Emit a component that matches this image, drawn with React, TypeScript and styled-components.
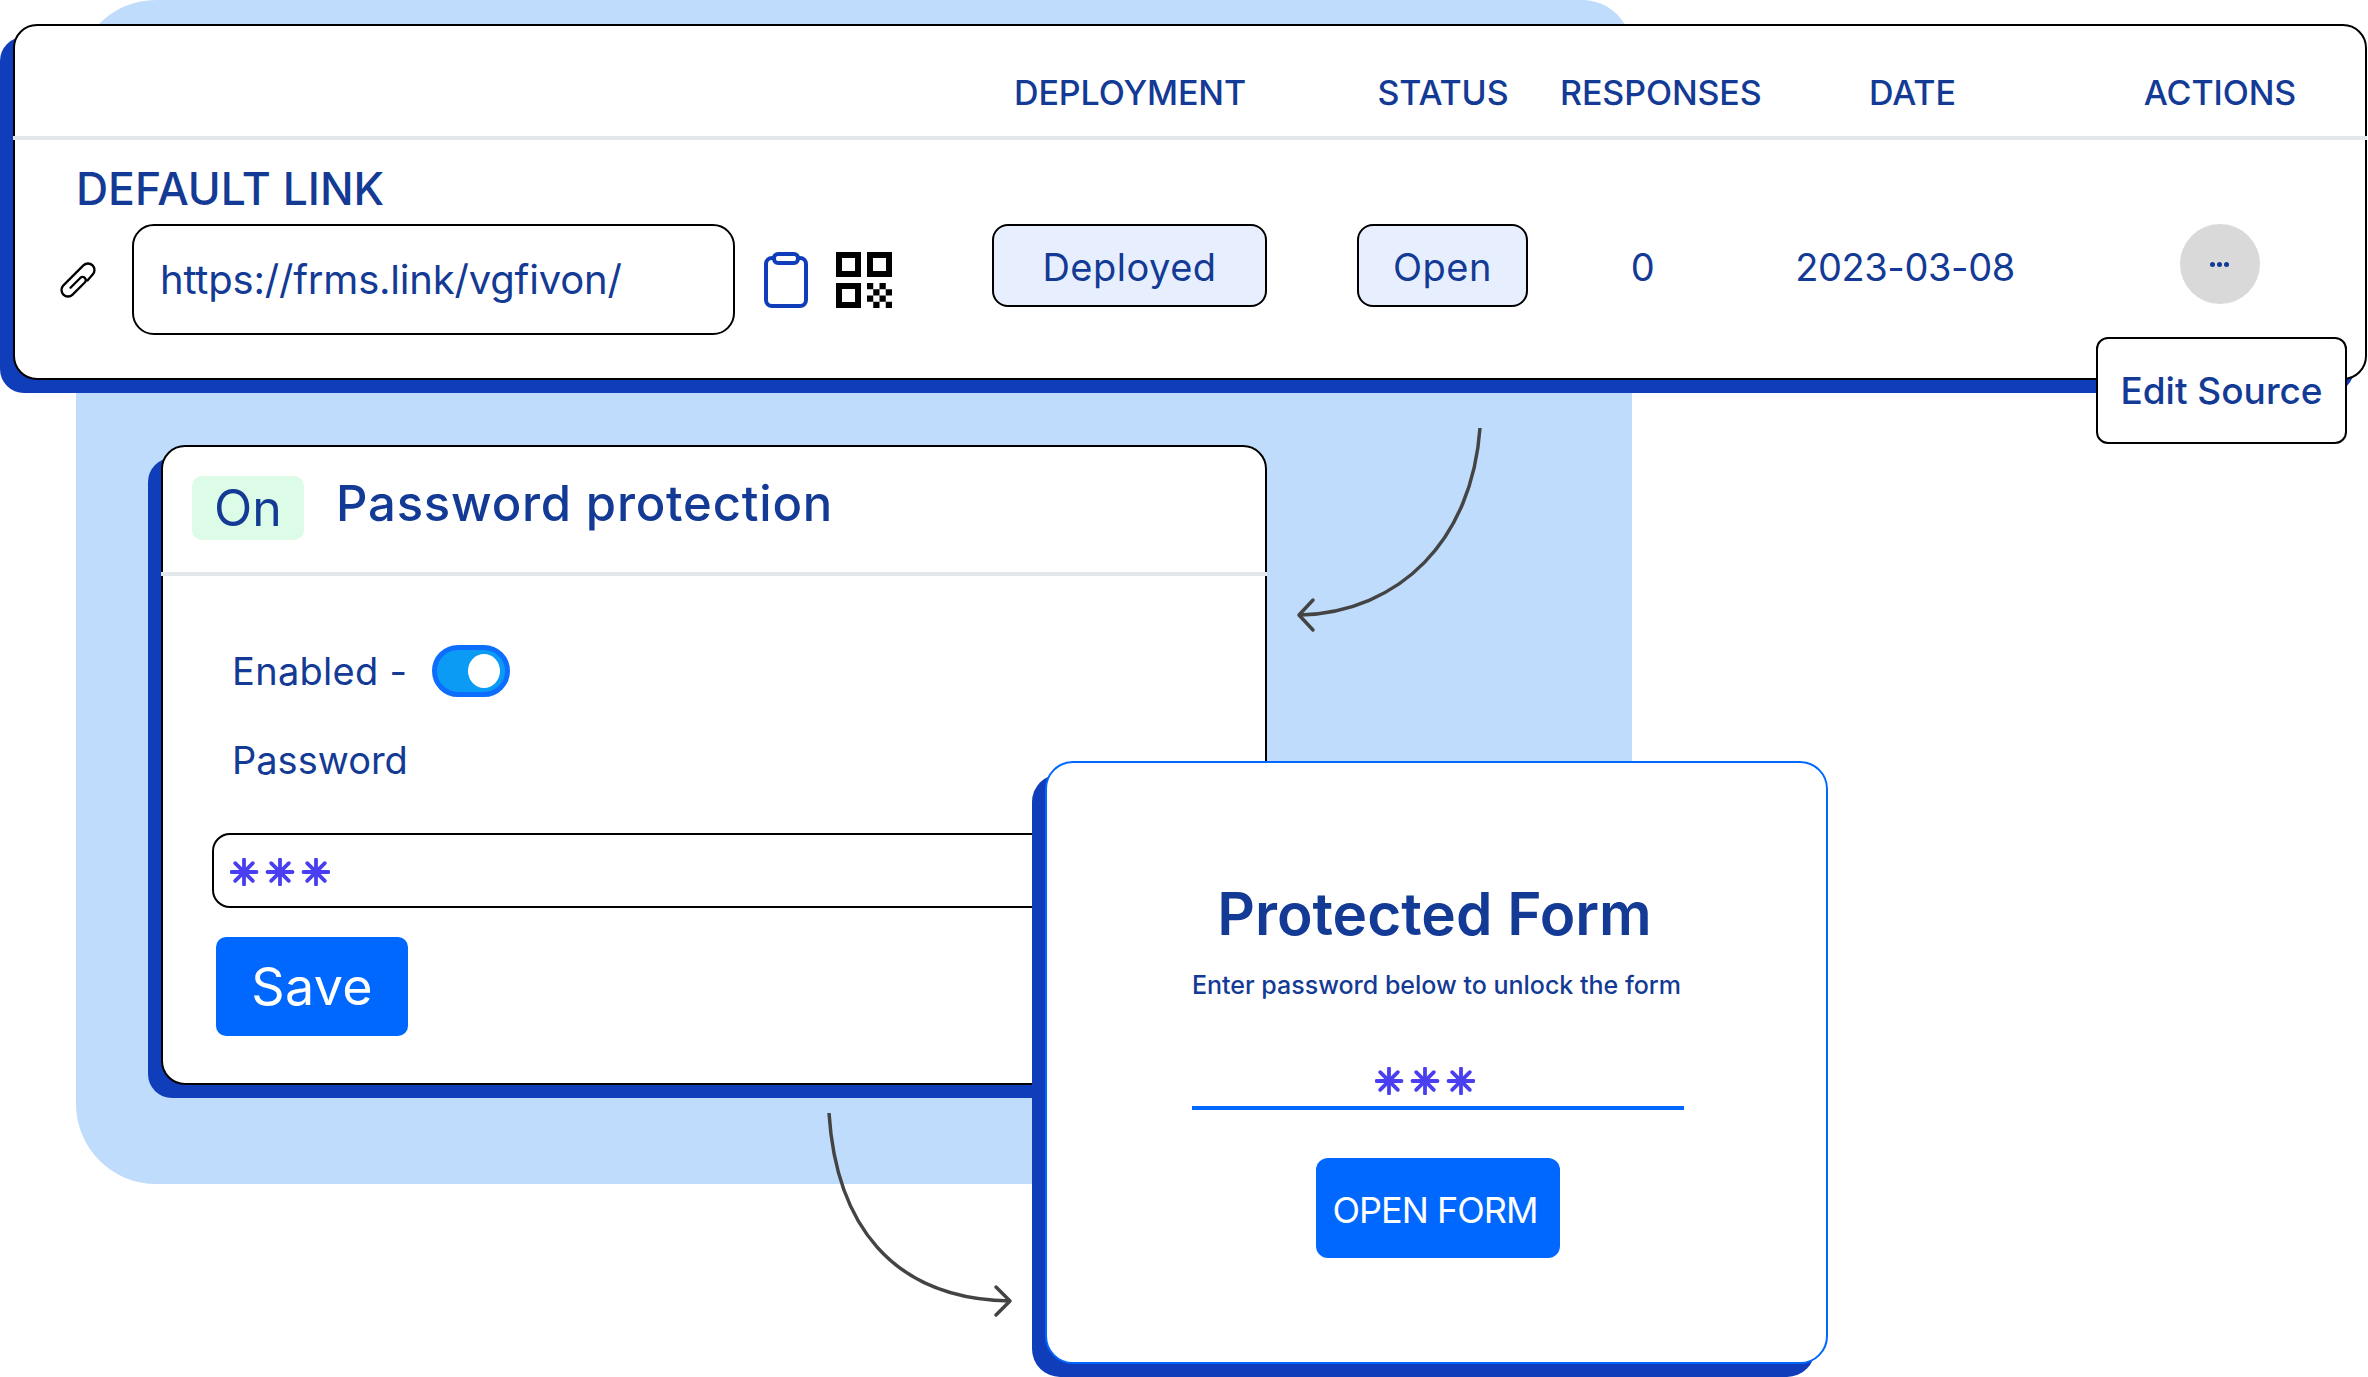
import styled, { createGlobalStyle } from "styled-components";

const INK = "#133a94";
const ROYAL = "#103dba";
const BRIGHT = "#0068ff";

const GlobalStyle = createGlobalStyle`
  html, body {
    margin: 0;
    background: #ffffff;
    overflow: hidden;
  }
  * {
    box-sizing: border-box;
  }
`;

const Stage = styled.div`
  position: relative;
  width: 2368px;
  height: 1377px;
  padding: 24px 1px 0 13px;
  overflow: hidden;
  font-family: Inter, "Noto Sans", sans-serif;
  color: ${INK};
`;

const Backdrop = styled.div`
  position: absolute;
  left: 76px;
  top: 0;
  width: 1556px;
  height: 1184px;
  background: #bfdcfc;
  border-radius: 80px;
  border-bottom-right-radius: 0;
  border-top-right-radius: 50px;
`;

const TableCard = styled.section`
  position: relative;
  width: 2354px;
  height: 356px;
  background: #fff;
  border: 2px solid #000;
  border-radius: 24px;
  box-shadow: -13px 13px 0 0 ${ROYAL};
`;

const columns = "919px 392px 234px 200px 315px 290px";

const HeadRow = styled.div`
  display: grid;
  grid-template-columns: ${columns};
  height: 114px;
  margin: 0 -2px;
  padding: 0 2px 22px;
  align-items: end;
  border-bottom: 4px solid #e4e8ec;
`;

const HeadCell = styled.div<{ $shift?: number }>`
  text-align: center;
  font-size: 34px;
  line-height: 42px;
  font-weight: 500;
  letter-spacing: -0.1px;
  padding-right: ${(p) => p.$shift ?? 0}px;
`;

const BodyRow = styled.div`
  display: grid;
  grid-template-columns: ${columns};
`;

const LinkCell = styled.div`
  padding: 24px 0 0 61px;
`;

const LinkTitle = styled.h2`
  margin: 0 0 10px;
  font-size: 44.5px;
  line-height: 50px;
  font-weight: 500;
`;

const LinkRow = styled.div`
  display: flex;
  align-items: center;
  margin-left: -16px;
`;

const UrlBox = styled.div`
  display: flex;
  align-items: center;
  width: 603px;
  height: 111px;
  margin-left: 36px;
  padding-left: 26px;
  border: 2px solid #000;
  border-radius: 22px;
  font-size: 40px;
  letter-spacing: -0.2px;
`;

const IconSet = styled.div`
  display: flex;
  align-items: center;
  gap: 28px;
  margin-left: 29px;
`;

const ValueCell = styled.div<{ $shift?: number }>`
  position: relative;
  display: flex;
  justify-content: center;
  padding-top: 84px;
  padding-right: ${(p) => p.$shift ?? 0}px;
`;

const Pill = styled.div<{ $width: number }>`
  display: flex;
  align-items: center;
  justify-content: center;
  width: ${(p) => p.$width}px;
  height: 83px;
  padding-top: 2px;
  background: #e7effe;
  border: 2px solid #000;
  border-radius: 16px;
  font-size: 38px;
  letter-spacing: 0.5px;
`;

const Value = styled.div<{ $spacing: number }>`
  height: 83px;
  line-height: 86px;
  font-size: 38px;
  letter-spacing: ${(p) => p.$spacing}px;
`;

const MoreButton = styled.div`
  display: flex;
  align-items: center;
  justify-content: center;
  gap: 2px;
  width: 80px;
  height: 80px;
  margin-right: 1px;
  border-radius: 50%;
  background: #d9d9d9;
`;

const MoreDot = styled.span`
  width: 5px;
  height: 5px;
  border-radius: 50%;
  background: ${INK};
`;

const EditMenu = styled.div`
  position: absolute;
  left: 21px;
  top: 197px;
  display: flex;
  align-items: center;
  justify-content: center;
  width: 251px;
  height: 107px;
  background: #fff;
  border: 2px solid #000;
  border-radius: 12px;
  font-size: 37px;
  font-weight: 500;
  white-space: nowrap;
`;

const PasswordCard = styled.section`
  position: relative;
  width: 1106px;
  height: 640px;
  margin: 65px 0 0 148px;
  background: #fff;
  border: 2px solid #000;
  border-radius: 24px;
  box-shadow: -13px 13px 0 0 ${ROYAL};
`;

const PasswordHead = styled.header`
  display: flex;
  align-items: flex-start;
  gap: 32px;
  height: 129px;
  margin: 0 -2px;
  padding: 29px 0 0 31px;
  border-bottom: 4px solid #e4e8ec;
`;

const OnBadge = styled.div`
  display: flex;
  align-items: center;
  justify-content: center;
  width: 112px;
  height: 64px;
  background: #dcfce7;
  border-radius: 10px;
  font-size: 50px;
`;

const PasswordTitle = styled.h3`
  margin: -2px 0 0;
  font-size: 49px;
  line-height: 60px;
  font-weight: 500;
  letter-spacing: 0.8px;
`;

const PasswordBody = styled.div`
  padding: 69px 0 0 49px;
`;

const ToggleRow = styled.div`
  display: flex;
  align-items: center;
  gap: 25px;
  margin-left: 20px;
  height: 52px;
  font-size: 38px;
  letter-spacing: 0.3px;
`;

const Toggle = styled.div`
  display: flex;
  justify-content: flex-end;
  align-items: center;
  width: 78px;
  height: 52px;
  padding-right: 5px;
  background: #0b9bf5;
  border: 5px solid #0d6efd;
  border-radius: 26px;
`;

const ToggleKnob = styled.div`
  width: 32px;
  height: 34px;
  border-radius: 50%;
  background: #fff;
`;

const FieldLabel = styled.div`
  margin: 41px 0 0 20px;
  font-size: 38px;
  line-height: 44px;
`;

const PasswordField = styled.div`
  display: flex;
  align-items: center;
  width: 1000px;
  height: 75px;
  margin-top: 51px;
  padding: 3px 0 0 16px;
  border: 2px solid #000;
  border-radius: 18px;
`;

const SaveButton = styled.div`
  display: flex;
  align-items: center;
  justify-content: center;
  width: 192px;
  height: 99px;
  margin: 29px 0 0 4px;
  background: ${BRIGHT};
  border-radius: 10px;
  color: #fff;
  font-size: 52px;
  letter-spacing: 0.3px;
`;

const FormCard = styled.section`
  position: absolute;
  left: 1045px;
  top: 761px;
  display: flex;
  flex-direction: column;
  align-items: center;
  width: 783px;
  height: 603px;
  padding-top: 116px;
  background: #fff;
  border: 2px solid ${BRIGHT};
  border-radius: 28px;
  box-shadow: -13px 13px 0 0 ${ROYAL};
`;

const FormTitle = styled.h1`
  margin: 0 4px 0 0;
  font-size: 58.5px;
  line-height: 70px;
  font-weight: 600;
`;

const FormHint = styled.p`
  margin: 20px 0 0;
  font-size: 25px;
  line-height: 32px;
  font-weight: 500;
`;

const FormField = styled.div`
  display: flex;
  justify-content: center;
  align-items: center;
  width: 492px;
  height: 50px;
  margin: 59px 0 0 2px;
  padding: 0 26px 4px 0;
  border-bottom: 4px solid ${BRIGHT};
`;

const OpenButton = styled.div`
  display: flex;
  align-items: center;
  justify-content: center;
  width: 244px;
  height: 100px;
  margin: 48px 0 0 3px;
  padding: 4px 6px 0 0;
  background: ${BRIGHT};
  border-radius: 12px;
  color: #fff;
  font-size: 36px;
  letter-spacing: -1px;
  white-space: nowrap;
`;

const ArrowLayer = styled.svg`
  position: absolute;
  left: 0;
  top: 0;
  pointer-events: none;
`;

function Stars() {
  const centers = [14, 50, 86];
  const spokes = [0, 45, 90, 135];
  return (
    <svg width="100" height="28" viewBox="0 0 100 28">
      {centers.map((cx) =>
        spokes.map((deg) => (
          <line
            key={`${cx}-${deg}`}
            x1={cx - 12.5}
            y1="14"
            x2={cx + 12.5}
            y2="14"
            stroke="#4a3ff0"
            strokeWidth="3.8"
            strokeLinecap="round"
            transform={`rotate(${deg} ${cx} 14)`}
          />
        ))
      )}
    </svg>
  );
}

function ClipIcon() {
  return (
    <svg width="36" height="36" viewBox="0 0 36 36" fill="none">
      <path
        d="M27.5 18.5 L32.6 12.6 A6.5 6.5 0 0 0 23.4 3.4 L3.4 23.4 A6.5 6.5 0 0 0 12.6 32.6 L25 20.2 A3.2 3.2 0 0 0 20.5 15.7 L10.5 25.7"
        stroke="#000"
        strokeWidth="2.3"
        strokeLinecap="round"
        strokeLinejoin="round"
      />
    </svg>
  );
}

function ClipboardIcon() {
  return (
    <svg width="44" height="56" viewBox="0 0 44 56" fill="none" stroke={ROYAL} strokeWidth="4">
      <rect x="2" y="6" width="40" height="48" rx="6" />
      <rect x="10" y="2" width="24" height="9" rx="4" fill="#fff" />
    </svg>
  );
}

function QrIcon() {
  const cells = [0, 1, 2, 3].flatMap((row) =>
    [0, 1, 2, 3].filter((col) => (row + col) % 2 === 0).map((col) => [col, row])
  );
  return (
    <svg width="56" height="56" viewBox="0 0 56 56">
      <path
        fillRule="evenodd"
        d="M0 0h25v25H0zM6 6v13h13V6zM31 0h25v25H31zM37 6v13h13V6zM0 31h25v25H0zM6 37v13h13V37z"
      />
      {cells.map(([col, row]) => (
        <rect key={`${col}-${row}`} x={31 + col * 6.25} y={31 + row * 6.25} width="6.25" height="6.25" />
      ))}
    </svg>
  );
}

function Arrows() {
  return (
    <ArrowLayer width="2368" height="1377" viewBox="0 0 2368 1377" fill="none" stroke="#444" strokeWidth="3.5">
      <path d="M1480 428 C1472 540 1400 612 1300 615" />
      <path d="M1313 600 L1299 615 L1313 630" strokeLinejoin="round" strokeLinecap="round" />
      <path d="M829 1113 C836 1222 890 1299 1010 1301" />
      <path d="M996 1287 L1010 1301 L996 1315" strokeLinejoin="round" strokeLinecap="round" />
    </ArrowLayer>
  );
}

export default function App() {
  return (
    <Stage>
      <GlobalStyle />
      <Backdrop />
      <TableCard>
        <HeadRow>
          <div />
          <HeadCell>DEPLOYMENT</HeadCell>
          <HeadCell>STATUS</HeadCell>
          <HeadCell>RESPONSES</HeadCell>
          <HeadCell $shift={10}>DATE</HeadCell>
          <HeadCell>ACTIONS</HeadCell>
        </HeadRow>
        <BodyRow>
          <LinkCell>
            <LinkTitle>DEFAULT LINK</LinkTitle>
            <LinkRow>
              <ClipIcon />
              <UrlBox>https://frms.link/vgfivon/</UrlBox>
              <IconSet>
                <ClipboardIcon />
                <QrIcon />
              </IconSet>
            </LinkRow>
          </LinkCell>
          <ValueCell $shift={1}>
            <Pill $width={275}>Deployed</Pill>
          </ValueCell>
          <ValueCell $shift={1}>
            <Pill $width={171}>Open</Pill>
          </ValueCell>
          <ValueCell $shift={34}>
            <Value $spacing={0.6}>0</Value>
          </ValueCell>
          <ValueCell $shift={25}>
            <Value $spacing={-0.4}>2023-03-08</Value>
          </ValueCell>
          <ValueCell>
            <MoreButton>
              <MoreDot />
              <MoreDot />
              <MoreDot />
            </MoreButton>
            <EditMenu>Edit Source</EditMenu>
          </ValueCell>
        </BodyRow>
      </TableCard>
      <PasswordCard>
        <PasswordHead>
          <OnBadge>On</OnBadge>
          <PasswordTitle>Password protection</PasswordTitle>
        </PasswordHead>
        <PasswordBody>
          <ToggleRow>
            Enabled -
            <Toggle>
              <ToggleKnob />
            </Toggle>
          </ToggleRow>
          <FieldLabel>Password</FieldLabel>
          <PasswordField>
            <Stars />
          </PasswordField>
          <SaveButton>Save</SaveButton>
        </PasswordBody>
      </PasswordCard>
      <FormCard>
        <FormTitle>Protected Form</FormTitle>
        <FormHint>Enter password below to unlock the form</FormHint>
        <FormField>
          <Stars />
        </FormField>
        <OpenButton>OPEN FORM</OpenButton>
      </FormCard>
      <Arrows />
    </Stage>
  );
}
